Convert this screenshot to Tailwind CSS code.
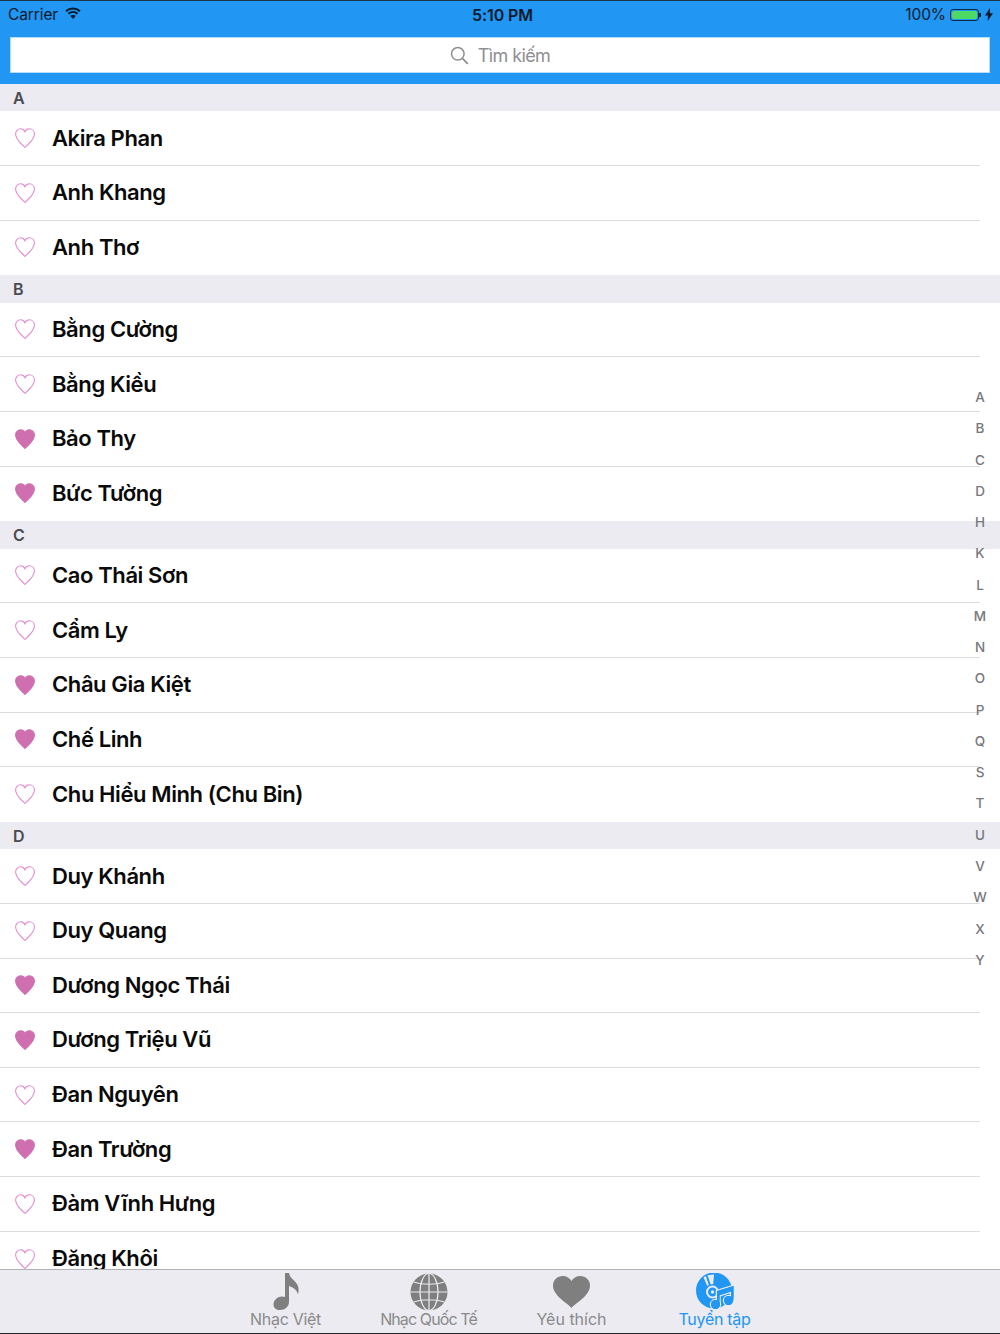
<!DOCTYPE html>
<html lang="vi">
<head>
    <meta charset="UTF-8">
    <meta name="viewport" content="width=device-width, initial-scale=1.0">
    <title>Tuyển tập</title>
    <script src="https://cdn.jsdelivr.net/npm/@tailwindcss/browser@4"></script>
</head>
<body class="bg-white font-['Inter','Noto_Sans',sans-serif]">
    <div class="relative w-[1000px] h-[1334px] overflow-hidden flex flex-col border-b border-[#22262c]">
        <header class="h-[84px] shrink-0 bg-[#2196f3] border-t border-[#1a3550] flex flex-col">
            <div class="h-[26px] relative flex items-center justify-between pl-2 pr-[7px] pt-px text-[#0b1a2a] text-[15.5px] tracking-[-0.1px]">
                <div class="flex items-center gap-[7px]">
                    <span>Carrier</span>
                    <svg width="16" height="12" viewBox="0 0 16 12" class="mb-[3px]" fill="none" stroke="#0b1a2a" stroke-width="2">
                        <path d="M1 4.200C5 .6 11 .6 15 4.200"/>
                        <path d="M3.400 6.700c2.700-2.300 6.500-2.300 9.200 0"/>
                        <path d="M8 12 5.200 8.800c1.600-1.200 4-1.200 5.600 0z" fill="#0b1a2a" stroke="none"/>
                    </svg>
                </div>
                <span class="absolute left-[472px] font-semibold text-[16px]">5:10 PM</span>
                <div class="flex items-center">
                    <span class="mr-[4px]">100%</span>
                    <div class="w-[29px] h-[12px] rounded-[3px] border border-[#0b2a45] p-px">
                        <div class="w-full h-full rounded-[2px] bg-[#4cd964]"></div>
                    </div>
                    <div class="w-[2px] h-[4px] bg-[#0b2a45] mr-[4px]"></div>
                    <svg width="8" height="13" viewBox="0 0 8 13"><path d="M5 0 0 7.400h3L2.600 13 8 5.200H4.800z" fill="#0b1a2a"/></svg>
                </div>
            </div>
            <div class="mx-[10px] mt-[10px] h-[36px] bg-white border border-[#b5dbfa] flex items-center justify-center gap-[9px] text-[18px] text-[#8e8e93] tracking-[-0.6px]">
                <svg width="19" height="19" viewBox="0 0 19 19" fill="none" stroke="#8e8e93" stroke-width="1.500">
                    <circle cx="7.800" cy="7.800" r="6.300"/>
                    <path d="m12.400 12.400 5.400 5.400" stroke-width="1.800"/>
                </svg>
                <span>Tìm kiếm</span>
            </div>
        </header>

        <main id="list" class="flex-1 min-h-0 overflow-hidden"></main>

        <nav class="h-[64px] shrink-0 bg-[#ebebf1] border-t border-[#b2b2b2] flex justify-center">
            <div class="w-[143px] flex flex-col items-center text-[#8a8a8a]">
                <svg width="40" height="38" viewBox="0 0 40 38" class="mt-[3px]" fill="#7f7f7f">
                    <path d="M19 0h4c.5 3.500 2.500 5 5 7.500 3.500 3.500 6 7 4 14-.5-3.500-4-7-9-8.500v16c0 4.500-4 8-9 8-4 0-6.500-2-6.500-5.500 0-4.500 4.500-8 8.500-8 1.100 0 2.100.2 3 .6z"/>
                </svg>
                <span class="text-[16px] leading-[20px] tracking-[-0.3px] -mt-[2px]">Nhạc Việt</span>
            </div>
            <div class="w-[143px] flex flex-col items-center text-[#8a8a8a]">
                <svg width="38" height="38" viewBox="0 0 38 38" class="mt-[3px]" fill="none">
                    <circle cx="19" cy="19" r="18.500" fill="#7f7f7f"/>
                    <g stroke="#ebebf1" stroke-width="1.200">
                        <ellipse cx="19" cy="19" rx="9" ry="18.500"/>
                        <path d="M19 .5v37M.5 19h37M3.500 9c9 3 22 3 31 0M3.500 29c9-3 22-3 31 0"/>
                    </g>
                </svg>
                <span class="text-[16px] leading-[20px] tracking-[-0.9px] -mt-[2px]">Nhạc Quốc Tế</span>
            </div>
            <div class="w-[143px] flex flex-col items-center text-[#8a8a8a]">
                <svg width="37" height="32" viewBox="0 0 38 32" class="mt-[6px] mb-[3px]" preserveAspectRatio="none" fill="#7f7f7f">
                    <path d="M19 32C15 27 0 20 0 9.500 0 4 4.500 0 10 0c4 0 7.300 2 9 5C20.700 2 24 0 28 0c5.500 0 10 4 10 9.500C38 20 23 27 19 32z"/>
                </svg>
                <span class="text-[16px] leading-[20px] -mt-[2px]">Yêu thích</span>
            </div>
            <div class="w-[143px] flex flex-col items-center text-[#2196f3]">
                <svg width="38" height="38" viewBox="0 0 38 38" class="mt-[3px]">
                    <circle cx="18" cy="17.500" r="18" fill="#2196f3"/>
                    <path d="M11.500 2.300 18 1.500l-.8 9.500a8 8 0 0 0-2.500.4z" fill="#ebebf1"/>
                    <path d="M7.500 4.500 9.800 3l3 9-1.500 1z" fill="#ebebf1"/>
                    <circle cx="16.500" cy="19" r="5.500" fill="none" stroke="#ebebf1" stroke-width="2"/>
                    <circle cx="16.500" cy="19" r="1.700" fill="#ebebf1"/>
                    <g fill="#2196f3" stroke="#ebebf1" stroke-width="2.500" paint-order="stroke">
                        <path d="M21 18 37.500 13v14.500H35v-9l-11.500 3.800V31H21z"/>
                        <circle cx="19.500" cy="31.500" r="4.500"/>
                        <circle cx="32.500" cy="27.500" r="4.500"/>
                    </g>
                    <g fill="#2196f3">
                        <path d="M21 18 37.500 13v14.500H35v-9l-11.500 3.800V31H21z"/>
                        <circle cx="19.500" cy="31.500" r="4.500"/>
                        <circle cx="32.500" cy="27.500" r="4.500"/>
                    </g>
                </svg>
                <span class="text-[16px] leading-[20px] tracking-[-0.3px] -mt-[2px]">Tuyển tập</span>
            </div>
        </nav>

        <div class="absolute top-[387px] right-0 w-[40px] h-[583px] flex flex-col justify-between items-center text-[13.5px] leading-[20px] font-medium text-[#77777c]">
            <span>A</span><span>B</span><span>C</span><span>D</span><span>H</span><span>K</span><span>L</span><span>M</span><span>N</span><span>O</span><span>P</span><span>Q</span><span>S</span><span>T</span><span>U</span><span>V</span><span>W</span><span>X</span><span>Y</span>
        </div>
    </div>

    <script>
        const sections = [
            ['A', [['Akira Phan', 0], ['Anh Khang', 0], ['Anh Thơ', 0]]],
            ['B', [['Bằng Cường', 0], ['Bằng Kiều', 0], ['Bảo Thy', 1], ['Bức Tường', 1]]],
            ['C', [['Cao Thái Sơn', 0], ['Cẩm Ly', 0], ['Châu Gia Kiệt', 1], ['Chế Linh', 1], ['Chu Hiểu Minh (Chu Bin)', 0]]],
            ['D', [['Duy Khánh', 0], ['Duy Quang', 0], ['Dương Ngọc Thái', 1], ['Dương Triệu Vũ', 1], ['Đan Nguyên', 0], ['Đan Trường', 1], ['Đàm Vĩnh Hưng', 0], ['Đăng Khôi', 0]]]
        ];
        const heartPath = 'M10 19.500C7 16 .6 12 .6 6 .6 3 2.800.8 5.500.8 7.500.8 9.200 2 10 3.800 10.800 2 12.500.8 14.500.8c2.700 0 4.900 2.200 4.900 5.200C19.400 12 13 16 10 19.500z';

        function renderRow(name, liked, isLast) {
            return `
                <div class="h-[54.67px] relative flex items-center pl-[15px]">
                    <svg width="20" height="20" viewBox="0 0 20 20" class="shrink-0 -mt-[1px]" fill="${liked ? '#cf6fb0' : 'none'}" stroke="${liked ? '#cf6fb0' : '#e48ccf'}" stroke-width="1.100"><path d="${heartPath}"/></svg>
                    <span class="ml-[17px] -mt-[1px] text-[22px] font-semibold text-[#0a0a0a] tracking-[-0.4px] whitespace-nowrap">${name}</span>
                    ${isLast ? '' : '<div class="absolute left-0 bottom-0 w-[980px] h-px bg-[#dcdcde]"></div>'}
                </div>`;
        }

        document.getElementById('list').innerHTML = sections.map(([letter, rows]) => `
            <div class="h-[27.33px] bg-[#ebebf1] flex items-center pl-[13px] text-[16px] font-semibold text-[#4a4a4f]">${letter}</div>
            ${rows.map(([name, liked], i) => renderRow(name, liked, i === rows.length - 1)).join('')}
        `).join('');
    </script>
</body>
</html>
